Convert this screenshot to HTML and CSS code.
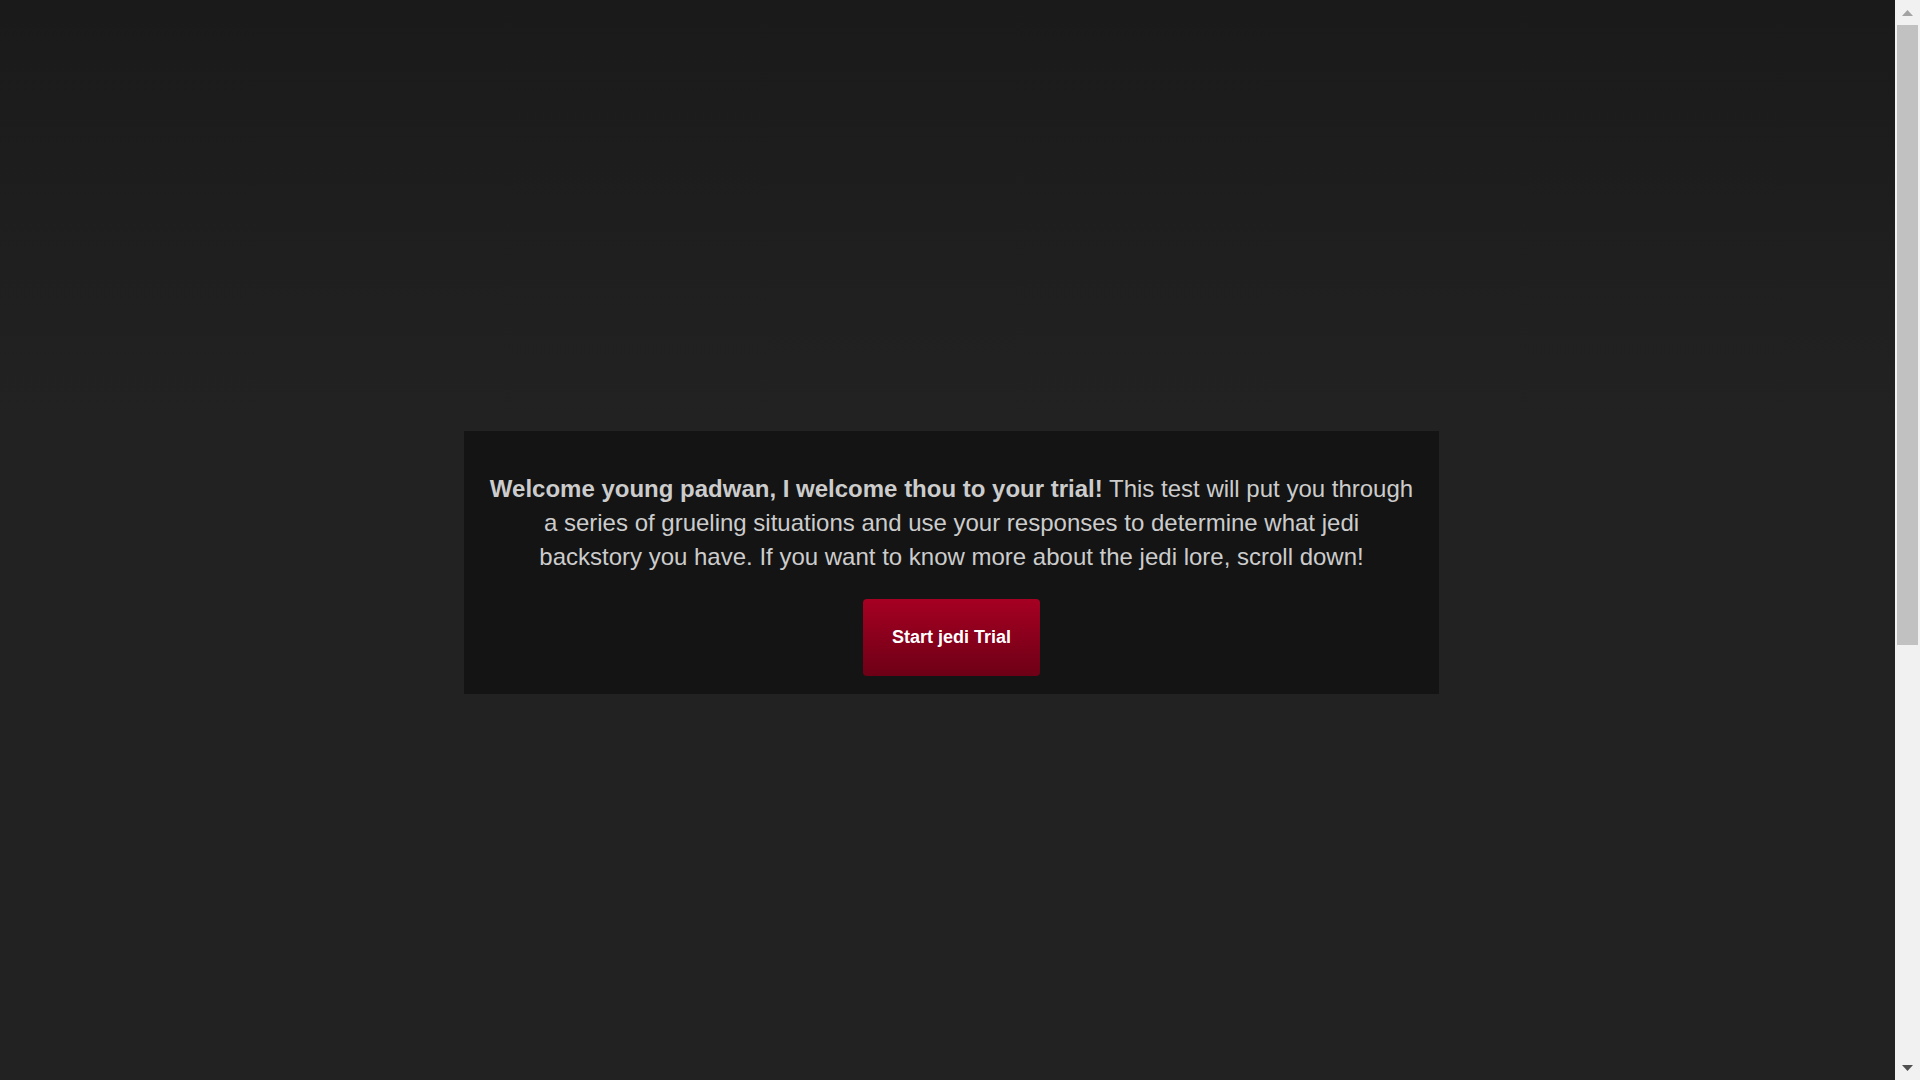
FILE: index.html
```html
<!DOCTYPE html>
<html lang="en">
<head>
<meta charset="utf-8">
<title>Jedi Trial</title>
<link rel="stylesheet" href="styles.css">
</head>
<body>
<div class="page">
  <section class="hero">
    <div class="intro">
      <p class="intro-text"><strong>Welcome young padwan, I welcome thou to your trial!</strong> This test will put you through a series of grueling situations and use your responses to determine what jedi<br> backstory you have. If you want to know more about the jedi lore, scroll down!</p>
      <button class="start-btn" type="button">Start jedi Trial</button>
    </div>
  </section>
  <section class="lore"></section>
</div>
<div class="scrollbar" aria-hidden="true">
  <div class="sb-btn">
    <svg width="11" height="6" viewBox="0 0 11 6"><polygon points="0,6 11,6 5.5,0" fill="#a3a3a3"/></svg>
  </div>
  <div class="sb-thumb"></div>
  <div class="sb-track"></div>
  <div class="sb-btn">
    <svg width="11" height="6" viewBox="0 0 11 6"><polygon points="0,0 11,0 5.5,6" fill="#505050"/></svg>
  </div>
</div>
</body>
</html>
```
FILE: styles.css
```css
html, body {
  margin: 0;
  padding: 0;
  height: 100%;
  overflow: hidden;
}
body {
  display: flex;
  background-color: #222222;
  font-family: "Liberation Sans", Arial, sans-serif;
  color: #cccccc;
}
.page {
  flex: 1;
  height: 100vh;
  overflow: hidden;
  background: linear-gradient(to bottom, #1a1a1a 0px, #222222 420px, #222222 100%);
  background-color: #222222;
}
.scrollbar {
  width: 25px;
  height: 100vh;
  flex-shrink: 0;
  background: #f1f1f1;
  display: flex;
  flex-direction: column;
}
.sb-btn {
  height: 25px;
  flex-shrink: 0;
  display: flex;
  align-items: center;
  justify-content: center;
}
.sb-btn svg {
  display: block;
}
.sb-thumb {
  height: 620px;
  flex-shrink: 0;
  margin: 0 2px;
  background: #c1c1c1;
}
.sb-track {
  flex: 1;
}
.hero {
  height: 1080px;
  box-sizing: border-box;
  padding-top: 44px;
  padding-left: 8px;
  display: flex;
  align-items: center;
  justify-content: center;
}
.intro {
  width: 975px;
  box-sizing: border-box;
  background: #141414;
  padding: 20px 25px 18px;
  display: flex;
  flex-direction: column;
  align-items: center;
  text-align: center;
}
.intro-text {
  margin: 21px 0 25px;
  font-size: 24px;
  line-height: 34px;
  color: #cccccc;
}
.intro-text strong {
  font-weight: bold;
}
.start-btn {
  font-family: "Liberation Sans", Arial, sans-serif;
  font-size: 18px;
  font-weight: bold;
  color: #ffffff;
  border: none;
  border-radius: 4px;
  padding: 28px 29px;
  background: linear-gradient(to bottom, #a60022, #6d0016);
  cursor: pointer;
}
.lore {
  height: 742px;
}
```
